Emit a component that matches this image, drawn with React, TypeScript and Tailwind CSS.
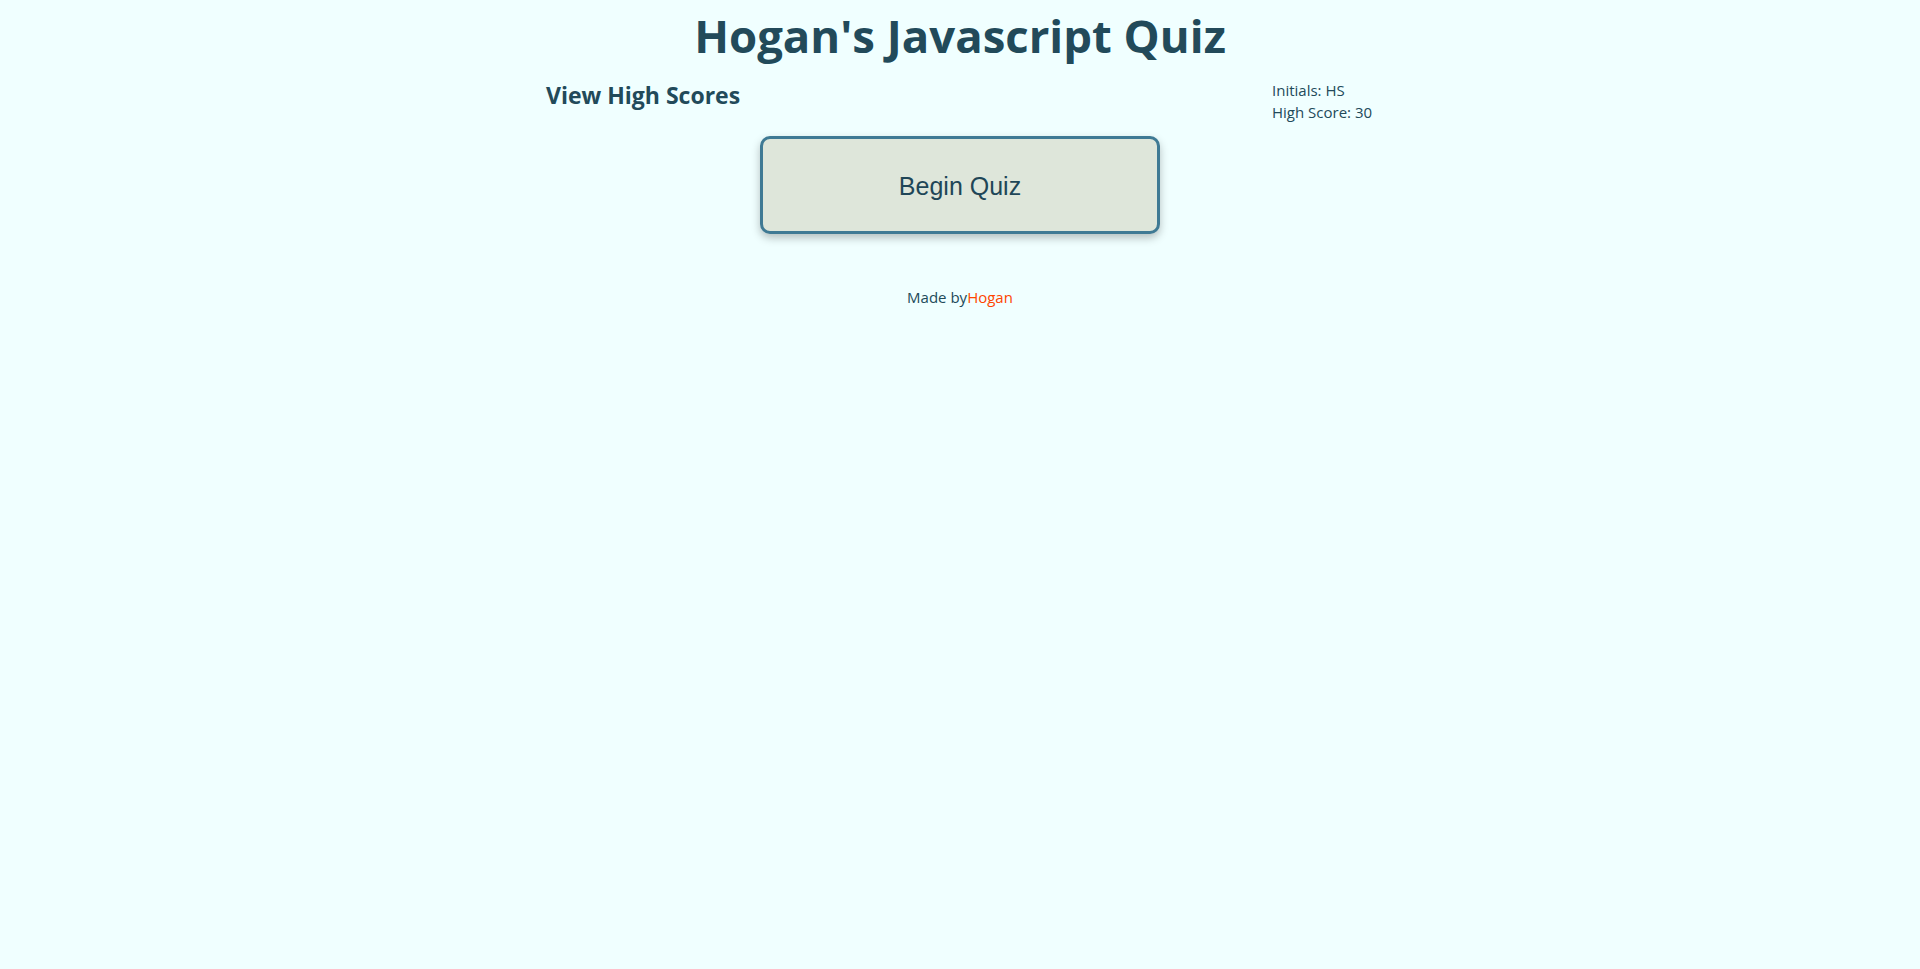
export default function App() {
  return (
    <div className="min-h-[969px] bg-[#f0ffff] text-[#224a5a] font-['Open_Sans',sans-serif]">
      <h1 className="text-center text-[45.5px] font-bold leading-[70px]">Hogan's Javascript Quiz</h1>

      <div className="mx-auto flex w-[828px] items-start justify-between">
        <h2 className="mt-[10px] text-[23px] font-bold leading-[30px]">View High Scores</h2>
        <div className="mt-[9px] w-[102px] text-[15px] leading-[22px]">
          <p>Initials: HS</p>
          <p>High Score: 30</p>
        </div>
      </div>

      <div className="mt-[13px] flex justify-center">
        <button className="h-[98px] w-[400px] rounded-[10px] border-[3px] border-[#3f7a94] bg-[#dee6da] pt-[3px] text-[25px] text-[#1f4657] shadow-[0_4px_8px_rgba(0,0,0,0.25)] font-['Liberation_Sans',Arial,sans-serif]">
          Begin Quiz
        </button>
      </div>

      <p className="mt-[53px] text-center text-[15px] leading-[20px]">
        Made by<span className="text-[#ff4500]">Hogan</span>
      </p>
    </div>
  );
}
